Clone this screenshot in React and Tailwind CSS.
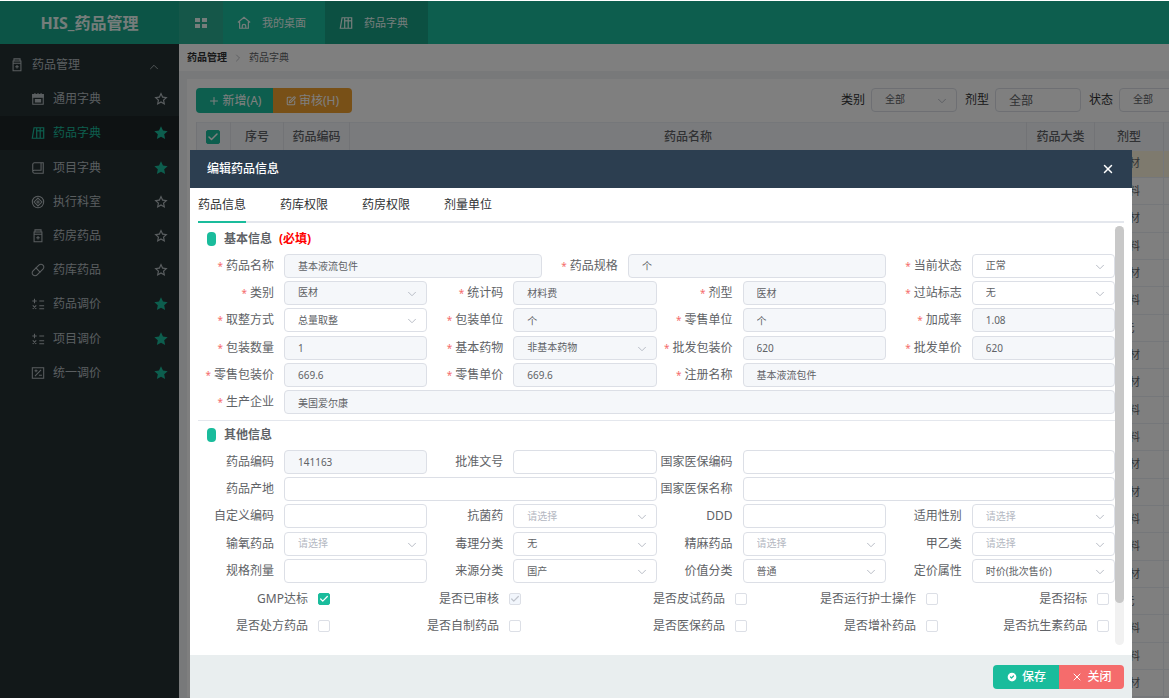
import { Check, ChevronDown, ChevronRight, ChevronUp, CircleCheck, Pill, Plus, SquarePen, X } from 'lucide-react'
import { RiStarFill, RiStarLine } from 'react-icons/ri'

function Svg({ children, className = 'size-3.5' }) {
  return (
    <svg viewBox="0 0 16 16" fill="none" stroke="currentColor" strokeWidth="1.2" className={className}>
      {children}
    </svg>
  )
}

const BottleIcon = () => (
  <Svg>
    <path d="M4.5 1h7v2.500h-7zM4.500 3.500h-1v11h9v-11h-1M4 6h8M8 8v4M6 10h4" />
  </Svg>
)

const CalendarIcon = () => (
  <Svg>
    <path d="M2 3h12v11H2zM4.5 1v3M8 1v3M11.5 1v3" />
    <path d="M2 3h12v3H2z" fill="currentColor" />
    <path d="M5 8.500h6v3h-6z" fill="currentColor" />
  </Svg>
)

const BooksIcon = () => (
  <Svg>
    <path d="M3.500 2h3v12h-5zM6.500 2h8v12h-8zM10.500 2v12" strokeWidth="1.4" />
    <path d="M6.500 5.500h8" strokeWidth="1.4" />
  </Svg>
)

const BookIcon = () => (
  <Svg>
    <path d="M4 2h10v12H4a2 2 0 0 1-2-2V4a2 2 0 0 1 2-2zM2 12a1.500 1.500 0 0 1 1.500-1.500H11.500V2" />
  </Svg>
)

const WardIcon = () => (
  <Svg>
    <circle cx="8" cy="8" r="6.5" />
    <path d="M8 3.500 12.500 8 8 12.500 3.500 8zM8 6v4M6 8h4" />
  </Svg>
)

const CalcIcon = () => (
  <Svg>
    <path d="M1.500 4.500h5M4 2v5M9.500 4.500h5.500M2 9.500l4 4M6 9.500l-4 4M9.500 10h5.500M9.500 13.500h5.500" />
  </Svg>
)

const RateIcon = () => (
  <Svg>
    <path d="M1.500 2h13v12h-13zM4.500 11.500l7-7M4 5.500h3.500M5.700 4v3M9 10.500h3.500" />
  </Svg>
)

const PillIcon = () => <Pill className="size-3.5" strokeWidth={1.8} />

const HomeIcon = () => (
  <Svg>
    <path
      d="M1 7.500 8 1.500l7 6M3 6.500V14h10V6.500M6 14v-2.500a2 2 0 0 1 4 0V14"
      strokeWidth="1.4"
    />
  </Svg>
)

const menu = [
  { label: '通用字典', Icon: CalendarIcon },
  { label: '药品字典', Icon: BooksIcon, starred: true, active: true },
  { label: '项目字典', Icon: BookIcon, starred: true },
  { label: '执行科室', Icon: WardIcon },
  { label: '药房药品', Icon: BottleIcon },
  { label: '药库药品', Icon: PillIcon },
  { label: '药品调价', Icon: CalcIcon, starred: true },
  { label: '项目调价', Icon: CalcIcon, starred: true },
  { label: '统一调价', Icon: RateIcon, starred: true },
]

const forms = [
  '医材', '材料', '医材', '材料', '医材', '材料', '无', '医材', '医材', '材料',
  '材料', '医材', '医材', '材料', '材料', '医材', '无', '材料', '材料', '医材',
]

const basicFields = [
  { label: '药品名称', value: '基本液流包件', span: 3, disabled: true },
  { label: '药品规格', value: '个', span: 3, disabled: true },
  { label: '当前状态', value: '正常', select: true },
  { label: '类别', value: '医材', select: true, disabled: true },
  { label: '统计码', value: '材料费', disabled: true },
  { label: '剂型', value: '医材', disabled: true },
  { label: '过站标志', value: '无', select: true },
  { label: '取整方式', value: '总量取整', select: true },
  { label: '包装单位', value: '个', disabled: true },
  { label: '零售单位', value: '个', disabled: true },
  { label: '加成率', value: '1.08', disabled: true },
  { label: '包装数量', value: '1', disabled: true },
  { label: '基本药物', value: '非基本药物', select: true, disabled: true },
  { label: '批发包装价', value: '620', disabled: true },
  { label: '批发单价', value: '620', disabled: true },
  { label: '零售包装价', value: '669.6', disabled: true },
  { label: '零售单价', value: '669.6', disabled: true },
  { label: '注册名称', value: '基本液流包件', span: 4, disabled: true },
  { label: '生产企业', value: '美国爱尔康', span: 8, disabled: true },
]

const otherFields = [
  { label: '药品编码', value: '141163', disabled: true },
  { label: '批准文号' },
  { label: '国家医保编码', span: 4 },
  { label: '药品产地', span: 4 },
  { label: '国家医保名称', span: 4 },
  { label: '自定义编码' },
  { label: '抗菌药', select: true },
  { label: 'DDD' },
  { label: '适用性别', select: true },
  { label: '输氧药品', select: true },
  { label: '毒理分类', value: '无', select: true },
  { label: '精麻药品', select: true },
  { label: '甲乙类', select: true },
  { label: '规格剂量' },
  { label: '来源分类', value: '国产', select: true },
  { label: '价值分类', value: '普通', select: true },
  { label: '定价属性', value: '时价(批次售价)', select: true },
]

const flags = [
  { label: 'GMP达标', checked: true },
  { label: '是否已审核', checked: true, disabled: true },
  { label: '是否皮试药品' },
  { label: '是否运行护士操作' },
  { label: '是否招标' },
  { label: '是否处方药品' },
  { label: '是否自制药品' },
  { label: '是否医保药品' },
  { label: '是否增补药品' },
  { label: '是否抗生素药品' },
]

const spans = { 2: 'col-span-2', 3: 'col-span-3', 4: 'col-span-4', 8: 'col-span-8' }

const flagLayout = [
  { cell: 'col-span-5', label: 'w-[120px]' },
  { cell: 'col-span-5', label: 'w-[120px]' },
  { cell: 'col-span-5', label: 'w-[155px]' },
  { cell: 'col-span-5', label: 'w-[155px]' },
  { cell: 'col-span-4', label: 'w-[135px]' },
]

function Select({ id, value, disabled, className = '' }) {
  return (
    <div className={`relative ${className}`}>
      <select
        id={id}
        disabled={disabled}
        defaultValue={value || ''}
        className={`block h-6 w-full appearance-none rounded border border-[#dcdfe6] pr-6 pl-[13px] text-[10px] opacity-100 ${
          disabled ? 'bg-[#f5f7fa]' : 'bg-white'
        } ${value ? 'text-[#606266]' : 'text-[#b4b8c2]'}`}
      >
        <option value={value || ''}>{value || '请选择'}</option>
      </select>
      <ChevronDown className="pointer-events-none absolute top-1.5 right-2 size-3.5 text-[#b4b8c2]" strokeWidth={1.6} />
    </div>
  )
}

function Field({ label, value = '', span = 2, select, disabled, required }) {
  const id = `field-${label}`
  return (
    <div className={`flex items-center ${spans[span]}`}>
      <label htmlFor={id} className="w-[86px] shrink-0 pr-2.5 text-right whitespace-nowrap">
        {required && <span className="mr-[3px] text-[10px] text-[#f56c6c]">*</span>}
        {label}
      </label>
      {select ? (
        <Select id={id} value={value} disabled={disabled} className="min-w-0 flex-1" />
      ) : (
        <input
          id={id}
          type="text"
          defaultValue={value}
          disabled={disabled}
          className={`h-6 w-full min-w-0 flex-1 rounded border border-[#dcdfe6] px-[13px] text-[10px] ${
            disabled ? 'bg-[#f5f7fa]' : 'bg-white'
          }`}
        />
      )}
    </div>
  )
}

function Checkbox({ id, checked, disabled, label, className = 'size-3' }) {
  return (
    <span className={`relative block shrink-0 ${className}`}>
      <input
        id={id}
        type="checkbox"
        aria-label={label}
        defaultChecked={checked}
        disabled={disabled}
        className="peer block size-full appearance-none rounded-xs border border-[#dcdfe6] bg-white checked:border-[#1abc9c] checked:bg-[#1abc9c] disabled:border-[#dcdfe6] disabled:bg-[#f2f6fc]"
      />
      <Check
        className="pointer-events-none absolute inset-0 hidden size-full p-px text-white peer-checked:block peer-disabled:text-[#c0c4cc]"
        strokeWidth={3}
      />
    </span>
  )
}

function SectionTitle({ children }) {
  return (
    <h3 className="flex h-[27px] items-center pl-[9px] font-bold text-[#606266]">
      <span className="mr-2 h-3.5 w-[9px] rounded bg-[#1abc9c]" />
      {children}
    </h3>
  )
}

function Sidebar() {
  return (
    <aside className="w-[179px] shrink-0 bg-[#243032] text-xs text-[#b4bcc0]">
      <nav className="pt-1">
        <button type="button" className="flex h-[34px] w-full items-center pl-2.5">
          <BottleIcon />
          <span className="ml-2">药品管理</span>
          <ChevronUp className="mt-1 mr-[18px] ml-auto size-3.5" strokeWidth={1.5} />
        </button>
        <ul className="grid h-[308px] grid-rows-9">
          {menu.map(({ label, Icon, starred, active }) => (
            <li key={label} className={active ? 'bg-[#1c2527] text-[#1abc9c]' : ''}>
              <a href="#" className="flex h-full items-center pr-[11px] pl-[31px]">
                <span className="flex w-[22px] items-center">
                  <Icon />
                </span>
                {label}
                {starred ? (
                  <RiStarFill className="ml-auto size-3.5 text-[#1abc9c]" />
                ) : (
                  <RiStarLine className="ml-auto size-3.5" />
                )}
              </a>
            </li>
          ))}
        </ul>
      </nav>
    </aside>
  )
}

function TopBar() {
  return (
    <header className="flex h-[43px] shrink-0 bg-[#1abc9c] text-[11px] text-[#eafaf6]">
      <h1 className="flex w-[179px] shrink-0 items-center justify-center bg-[#18a98c] text-base font-bold">
        HIS_药品管理
      </h1>
      <button type="button" aria-label="菜单" className="flex w-11 items-center justify-center bg-[#2bae93]">
        <svg viewBox="0 0 12 12" fill="currentColor" className="size-3">
          <path d="M0 1h5v4H0zM7 1h5v4H7zM0 7h5v4H0zM7 7h5v4H7z" />
        </svg>
      </button>
      <a href="#" className="flex w-[102px] items-center gap-[11px] pt-px pl-3.5">
        <HomeIcon />
        我的桌面
      </a>
      <a href="#" className="flex w-[103px] items-center gap-[11px] bg-[#18a084] pt-px pl-3.5">
        <BooksIcon />
        药品字典
      </a>
    </header>
  )
}

function DrugList() {
  return (
    <main className="min-w-0 flex-1 overflow-hidden bg-[#f0f2f5]">
      <div className="flex h-[27px] items-center gap-1 bg-white pl-2 text-[10px] text-[#606266]">
        <a href="#" className="font-bold text-[#303133]">药品管理</a>
        <ChevronRight className="mx-px size-3 text-[#a8abb2]" strokeWidth={1.5} />
        <span>药品字典</span>
      </div>
      {/* the list is wider than the viewport and runs off to the right */}
      <section className="mt-2 -mr-[45px] ml-2 bg-white px-[9px] pt-[9px] text-xs text-[#303133]">
        <div className="flex h-[34px] items-start">
          <button type="button" className="flex h-[25px] w-[77px] items-center justify-center gap-[3px] rounded-l bg-[#1abc9c] text-white">
            <Plus className="size-3" strokeWidth={2} />
            新增(A)
          </button>
          <button type="button" className="flex h-[25px] w-[79px] items-center justify-center gap-[3px] rounded-r bg-[#f0a02f] text-white">
            <SquarePen className="size-2.5" strokeWidth={2.5} />
            审核(H)
          </button>
          <div className="ml-auto flex items-center gap-2">
            <label htmlFor="filter-type" className="-mr-0.5">类别</label>
            <Select id="filter-type" value="全部" className="w-[86px]" />
            <label htmlFor="filter-form" className="-mr-0.5">剂型</label>
            <input
              id="filter-form"
              type="text"
              defaultValue="全部"
              className="h-6 w-[86px] rounded border border-[#dcdfe6] px-[13px] text-[#606266]"
            />
            <label htmlFor="filter-state" className="-mr-0.5">状态</label>
            <Select id="filter-state" value="全部" className="w-[86px]" />
          </div>
        </div>
        <table className="w-full table-fixed border-collapse text-center text-[#606266]">
          <thead className="bg-[#f5f7fa]">
            <tr className="h-7 border-t border-[#ebeef5] [&>th]:border-x [&>th]:border-[#e4e7ed] [&>th]:font-medium">
              <th className="w-[34px] pl-[9px]">
                <Checkbox checked label="全选" className="size-3.5" />
              </th>
              <th className="w-[53px]">序号</th>
              <th className="w-[66px]">药品编码</th>
              <th>药品名称</th>
              <th className="w-[68px]">药品大类</th>
              <th className="w-[69px]">剂型</th>
              <th className="w-[41px]" />
            </tr>
          </thead>
          <tbody className="text-[11px]">
            {forms.map((form, i) => (
              <tr key={i} className="h-[27px] border-b border-[#ebeef5] first:bg-[#fdf5dc] nth-[3n]:h-7 [&>td]:border-r [&>td]:border-[#ebeef5]">
                <td />
                <td />
                <td />
                <td />
                <td />
                <td>{form}</td>
                <td />
              </tr>
            ))}
          </tbody>
        </table>
      </section>
    </main>
  )
}

function EditDialog() {
  return (
    <div role="dialog" aria-label="编辑药品信息" className="flex min-w-0 flex-1 flex-col bg-white text-xs text-[#606266]">
      <div className="flex h-[38px] shrink-0 items-center justify-between bg-[#2c3e50] px-[17px] text-white">
        <h2 className="font-medium">编辑药品信息</h2>
        <button type="button" aria-label="关闭对话框">
          <X className="size-3.5" strokeWidth={2.5} />
        </button>
      </div>
      <div className="mx-2 flex h-[35px] shrink-0 gap-[34px] border-b-2 border-[#e4e7ed] text-[#303133]">
        <button type="button" className="-mb-0.5 border-b-2 border-[#1abc9c]">药品信息</button>
        <button type="button">药库权限</button>
        <button type="button">药房权限</button>
        <button type="button">剂量单位</button>
      </div>
      <div className="flex min-h-0 flex-1 overflow-hidden px-2 pt-0.5">
        <form className="min-w-0 flex-1">
          <SectionTitle>
            基本信息<span className="ml-[7px] text-[#ff0000]">(必填)</span>
          </SectionTitle>
          <div className="grid h-[164px] grid-cols-8 grid-rows-6">
            {basicFields.map((field) => (
              <Field key={field.label} required {...field} />
            ))}
          </div>
          <hr className="mt-1 border-[#e4e7ed]" />
          <SectionTitle>其他信息</SectionTitle>
          <div className="grid h-[137px] grid-cols-8 grid-rows-5">
            {otherFields.map((field) => (
              <Field key={field.label} {...field} />
            ))}
          </div>
          <div className="grid h-[55px] grid-cols-24 grid-rows-2">
            {flags.map(({ label, checked, disabled }, i) => (
              <div key={label} className={`flex items-center ${flagLayout[i % 5].cell}`}>
                <label htmlFor={`flag-${label}`} className={`shrink-0 pr-2.5 text-right ${flagLayout[i % 5].label}`}>
                  {label}
                </label>
                <Checkbox id={`flag-${label}`} checked={checked} disabled={disabled} />
              </div>
            ))}
          </div>
        </form>
        <div className="mt-px mb-2.5 w-[9px] shrink-0 rounded-full bg-[#f1f1f1]">
          <div className="h-[90%] rounded-full bg-[#c8c8c8]" />
        </div>
      </div>
      <div className="flex h-[43px] shrink-0 items-center justify-end bg-[#e9eeef] pr-2 font-medium text-white">
        <button type="button" className="flex h-6 w-[66px] items-center justify-center gap-1 rounded-l bg-[#1abc9c]">
          <CircleCheck className="size-3 fill-white stroke-[#1abc9c]" strokeWidth={2.5} />
          保存
        </button>
        <button type="button" className="flex h-6 w-[65px] items-center justify-center gap-1 rounded-r bg-[#f56c6c]">
          <X className="size-3" strokeWidth={2} />
          关闭
        </button>
      </div>
    </div>
  )
}

export default function App() {
  return (
    <div className="relative flex h-screen flex-col overflow-hidden border-t border-r border-white font-['Noto_Sans','Noto_Sans_CJK_SC',sans-serif]">
      <TopBar />
      <div className="flex min-h-0 flex-1">
        <Sidebar />
        <DrugList />
      </div>
      <div className="absolute inset-0 z-10 flex bg-black/50 pt-[149px] pr-[37px] pl-[190px]">
        <EditDialog />
      </div>
    </div>
  )
}
